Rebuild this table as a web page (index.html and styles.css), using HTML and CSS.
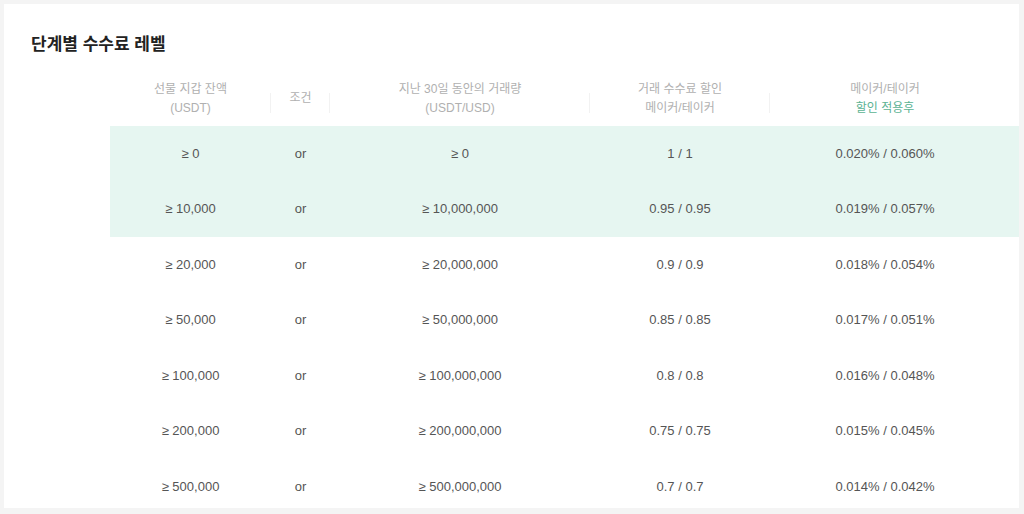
FILE: index.html
```html
<!DOCTYPE html>
<html lang="ko">
<head>
<meta charset="utf-8">
<title>단계별 수수료 레벨</title>
<link rel="stylesheet" href="styles.css">
</head>
<body>
<div class="card">
  <h2 class="title">단계별 수수료 레벨</h2>
  <div class="table">
    <div class="row head">
      <div class="cell c1 sep">선물 지갑 잔액<br>(USDT)</div>
      <div class="cell c2 sep">조건</div>
      <div class="cell c3 sep">지난 30일 동안의 거래량<br>(USDT/USD)</div>
      <div class="cell c4 sep">거래 수수료 할인<br>메이커/테이커</div>
      <div class="cell c5">메이커/테이커<br><span class="green">할인 적용후</span></div>
    </div>
    <div class="row hl"><div class="cell">≥ 0</div><div class="cell">or</div><div class="cell">≥ 0</div><div class="cell">1 / 1</div><div class="cell">0.020% / 0.060%</div></div>
    <div class="row hl"><div class="cell">≥ 10,000</div><div class="cell">or</div><div class="cell">≥ 10,000,000</div><div class="cell">0.95 / 0.95</div><div class="cell">0.019% / 0.057%</div></div>
    <div class="row"><div class="cell">≥ 20,000</div><div class="cell">or</div><div class="cell">≥ 20,000,000</div><div class="cell">0.9 / 0.9</div><div class="cell">0.018% / 0.054%</div></div>
    <div class="row"><div class="cell">≥ 50,000</div><div class="cell">or</div><div class="cell">≥ 50,000,000</div><div class="cell">0.85 / 0.85</div><div class="cell">0.017% / 0.051%</div></div>
    <div class="row"><div class="cell">≥ 100,000</div><div class="cell">or</div><div class="cell">≥ 100,000,000</div><div class="cell">0.8 / 0.8</div><div class="cell">0.016% / 0.048%</div></div>
    <div class="row"><div class="cell">≥ 200,000</div><div class="cell">or</div><div class="cell">≥ 200,000,000</div><div class="cell">0.75 / 0.75</div><div class="cell">0.015% / 0.045%</div></div>
    <div class="row"><div class="cell">≥ 500,000</div><div class="cell">or</div><div class="cell">≥ 500,000,000</div><div class="cell">0.7 / 0.7</div><div class="cell">0.014% / 0.042%</div></div>
  </div>
</div>
</body>
</html>
```
FILE: styles.css
```css
html, body {
  margin: 0;
  padding: 0;
  background: #f4f4f4;
  font-family: "Liberation Sans", Arial, "Noto Sans CJK KR", sans-serif;
}
.card {
  margin: 4px 5px 0 4px;
  height: 504px;
  background: #ffffff;
  padding-top: 27px;
  box-sizing: border-box;
  overflow: hidden;
}
.title {
  margin: 0 0 0 27px;
  font-size: 17px;
  line-height: 24px;
  font-weight: bold;
  color: #222;
  font-family: "Noto Sans CJK KR", sans-serif;
}
.table {
  margin-left: 106px;
  margin-top: 25px;
}
.row {
  display: grid;
  grid-template-columns: 161px 59px 260px 180px 230px 13px;
  height: 55.5px;
  align-items: center;
  font-size: 13px;
  color: #555;
}
.row.head {
  height: 45.5px;
  align-items: start;
  font-size: 12px;
  line-height: 19px;
  color: #b0b0b0;
}
.row.head .c2 {
  padding-top: 9px;
}
.cell {
  text-align: center;
}
.head .cell {
  position: relative;
}
.sep::after {
  content: "";
  position: absolute;
  right: 0;
  top: 13px;
  height: 20px;
  width: 1px;
  background: #f2f2f2;
}
.green {
  color: #5bb393;
}
.row.hl {
  background: #e6f6f1;
}
```
